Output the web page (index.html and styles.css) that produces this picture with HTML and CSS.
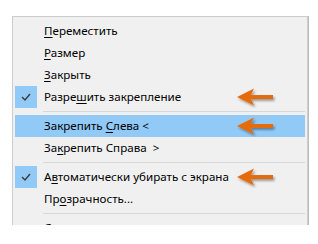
FILE: index.html
```html
<!DOCTYPE html>
<html lang="ru">
<head>
  <meta charset="UTF-8">
  <title>Меню</title>
  <link rel="stylesheet" href="styles.css">
</head>
<body>
  <svg width="0" height="0" class="defs">
    <defs>
      <filter id="shadow" x="-20%" y="-40%" width="150%" height="190%">
        <feDropShadow dx="1.5" dy="2" stdDeviation="1.3" flood-color="#000" flood-opacity="0.35"/>
      </filter>
      <symbol id="arrow" viewBox="0 0 44 22">
        <path d="M1 11 L18 2.5 L15 9 L37 9 L37 13 L15 13 L18 19.5 Z" fill="#e46c0a" filter="url(#shadow)"/>
      </symbol>
    </defs>
  </svg>

  <div class="menu">
    <div class="item"><span class="icon"></span><span class="label"><u>П</u>ереместить</span></div>
    <div class="item"><span class="icon"></span><span class="label"><u>Р</u>азмер</span></div>
    <div class="item"><span class="icon"></span><span class="label"><u>З</u>акрыть</span></div>
    <div class="item">
      <span class="icon checked">
        <svg width="22" height="22" viewBox="0 0 22 22"><polyline points="7,11 10,14 15,8" fill="none" stroke="#3b3b3b" stroke-width="1.4"/></svg>
      </span>
      <span class="label">Разре<u>ш</u>ить закрепление</span>
      <svg class="pointer"><use href="#arrow"/></svg>
    </div>
    <div class="sep"></div>
    <div class="item active">
      <span class="icon"></span>
      <span class="label">Закрепить <u>С</u>лева &lt;</span>
      <svg class="pointer"><use href="#arrow"/></svg>
    </div>
    <div class="item"><span class="icon"></span><span class="label">За<u>к</u>репить Справа&nbsp;&nbsp;&gt;</span></div>
    <div class="sep"></div>
    <div class="item">
      <span class="icon checked">
        <svg width="22" height="22" viewBox="0 0 22 22"><polyline points="7,11 10,14 15,8" fill="none" stroke="#3b3b3b" stroke-width="1.4"/></svg>
      </span>
      <span class="label">А<u>в</u>томатически убирать с экрана</span>
      <svg class="pointer"><use href="#arrow"/></svg>
    </div>
    <div class="item"><span class="icon"></span><span class="label">Пр<u>о</u>зрачность...</span></div>
    <div class="sep"></div>
    <div class="item"><span class="icon"></span><span class="label">Справка</span></div>
  </div>
</body>
</html>
```

FILE: styles.css
```css
body {
  margin: 0;
  background: #fff;
  font-family: "Noto Sans", "Open Sans", sans-serif;
  font-size: 11.6px;
  color: #000;
}

.defs {
  position: absolute;
}

.menu {
  margin: 16px 0 0 12px;
  width: 290px;
  height: 205px;
  padding: 3px 2px 0 2px;
  background: #f0f0f0;
  border: 1px solid #cccccc;
  border-bottom: none;
  box-shadow: 1px 0 0 #bdbdbd;
  overflow: hidden;
}

.item {
  display: flex;
  align-items: center;
  height: 22px;
}

.item.active {
  background: #91c9f7;
}

.icon {
  width: 22px;
  height: 22px;
  margin-right: 7px;
  flex: none;
}

.icon.checked {
  background: #91c9f7;
}

.icon svg {
  display: block;
}

.label {
  white-space: nowrap;
  line-height: 22px;
}

.label u {
  text-underline-offset: 2px;
}

.pointer {
  width: 44px;
  height: 22px;
  margin-left: auto;
  margin-right: 25px;
  flex: none;
}

.sep {
  height: 7px;
  margin-left: 28px;
  display: flex;
  align-items: center;
}

.sep::before {
  content: "";
  flex: 1;
  height: 1px;
  background: #d7d7d7;
}
```
